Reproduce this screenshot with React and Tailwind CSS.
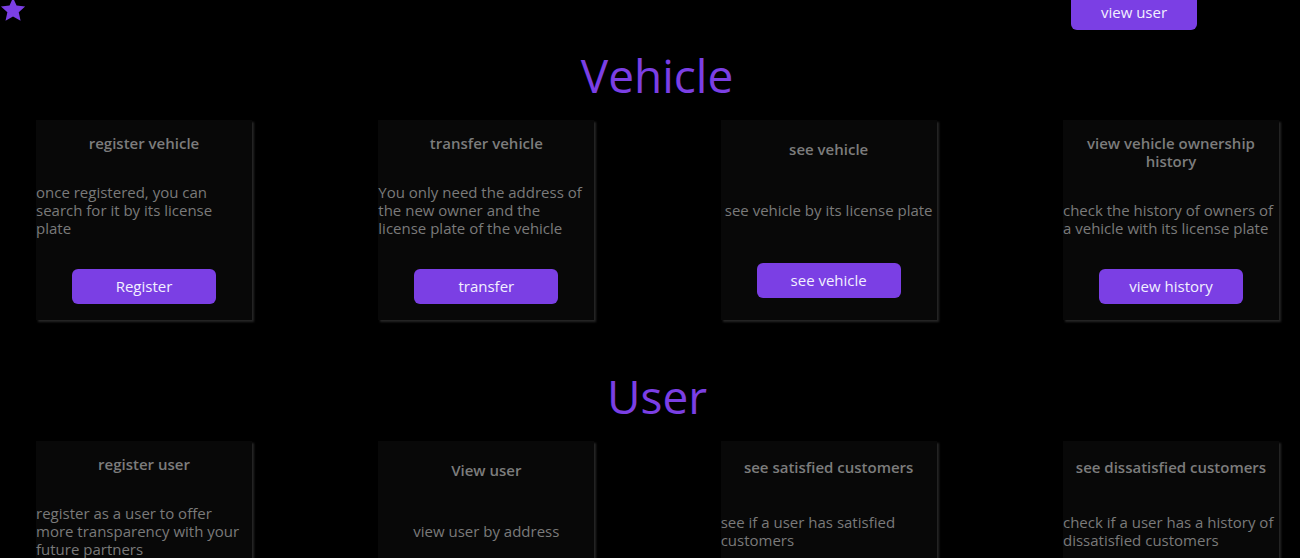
import React from 'react';

const vehicleCards = [
  {
    title: 'register vehicle',
    lines: ['once registered, you can', 'search for it by its license', 'plate'],
    action: 'Register',
  },
  {
    title: 'transfer vehicle',
    lines: ['You only need the address of', 'the new owner and the', 'license plate of the vehicle'],
    action: 'transfer',
  },
  {
    title: 'see vehicle',
    lines: ['see vehicle by its license plate'],
    action: 'see vehicle',
  },
  {
    title: ['view vehicle ownership', 'history'],
    lines: ['check the history of owners of', 'a vehicle with its license plate'],
    action: 'view history',
  },
];

const userCards = [
  {
    title: 'register user',
    lines: ['register as a user to offer', 'more transparency with your', 'future partners'],
    action: 'register',
  },
  {
    title: 'View user',
    lines: ['view user by address'],
    action: 'view user',
  },
  {
    title: 'see satisfied customers',
    lines: ['see if a user has satisfied', 'customers'],
    action: 'see',
  },
  {
    title: 'see dissatisfied customers',
    lines: ['check if a user has a history of', 'dissatisfied customers'],
    action: 'see',
  },
];

const Star = () => (
  <svg width="26" height="25" viewBox="0 0 24 23" className="mt-[3px] shrink-0">
    <path
      d="M12 0.6l3.3 7.3 7.9.8-5.9 5.4 1.7 7.8L12 17.9l-6.9 4 1.7-7.8L.9 8.7l7.9-.8z"
      fill="#7b3fe4"
    />
  </svg>
);

const Card = ({ card }) => {
  const title = Array.isArray(card.title) ? card.title : [card.title];
  const multi = card.lines.length > 1;

  return (
    <div className="w-[216px] h-[200px] bg-[#080808] shadow-[2px_2px_2px_#262626] flex flex-col items-center justify-around">
      <h3 className="-mt-[2px] text-[15px] leading-[18px] font-semibold text-[#7c7c7c] text-center">
        {title.map((t, i) => (
          <React.Fragment key={i}>
            {i > 0 && <br />}
            {t}
          </React.Fragment>
        ))}
      </h3>
      <p className={`text-[15px] leading-[18px] text-[#7a7a7a] ${multi ? 'self-stretch text-left' : 'text-center'}`}>
        {card.lines.map((l, i) => (
          <React.Fragment key={i}>
            {i > 0 && <br />}
            {l}
          </React.Fragment>
        ))}
      </p>
      <button className="w-[144px] h-[35px] rounded-md bg-[#7b3fe4] text-[15px] text-[#f2f0ff]">
        {card.action}
      </button>
    </div>
  );
};

const Section = ({ name, cards }) => (
  <section className="flex flex-col">
    <h2 className="pl-[14px] text-center text-[46px] leading-[48px] text-[#7b3fe4] font-normal">{name}</h2>
    <div className="mt-[21px] grid grid-cols-[repeat(4,216px)] gap-x-[126.33px] pl-[36px]">
      {cards.map((c, i) => (
        <Card key={i} card={c} />
      ))}
    </div>
  </section>
);

export default function App() {
  return (
    <div className="min-h-screen bg-black overflow-hidden font-['Open_Sans',sans-serif]">
      <header className="flex items-start justify-between -mt-[6px] h-[36px]">
        <Star />
        <button className="mr-[103px] w-[126px] h-[36px] rounded-md bg-[#7b3fe4] text-[15px] text-[#f2f0ff]">
          view user
        </button>
      </header>
      <div className="pt-[21px]">
        <Section name="Vehicle" cards={vehicleCards} />
      </div>
      <div className="pt-[52px]">
        <Section name="User" cards={userCards} />
      </div>
    </div>
  );
}
